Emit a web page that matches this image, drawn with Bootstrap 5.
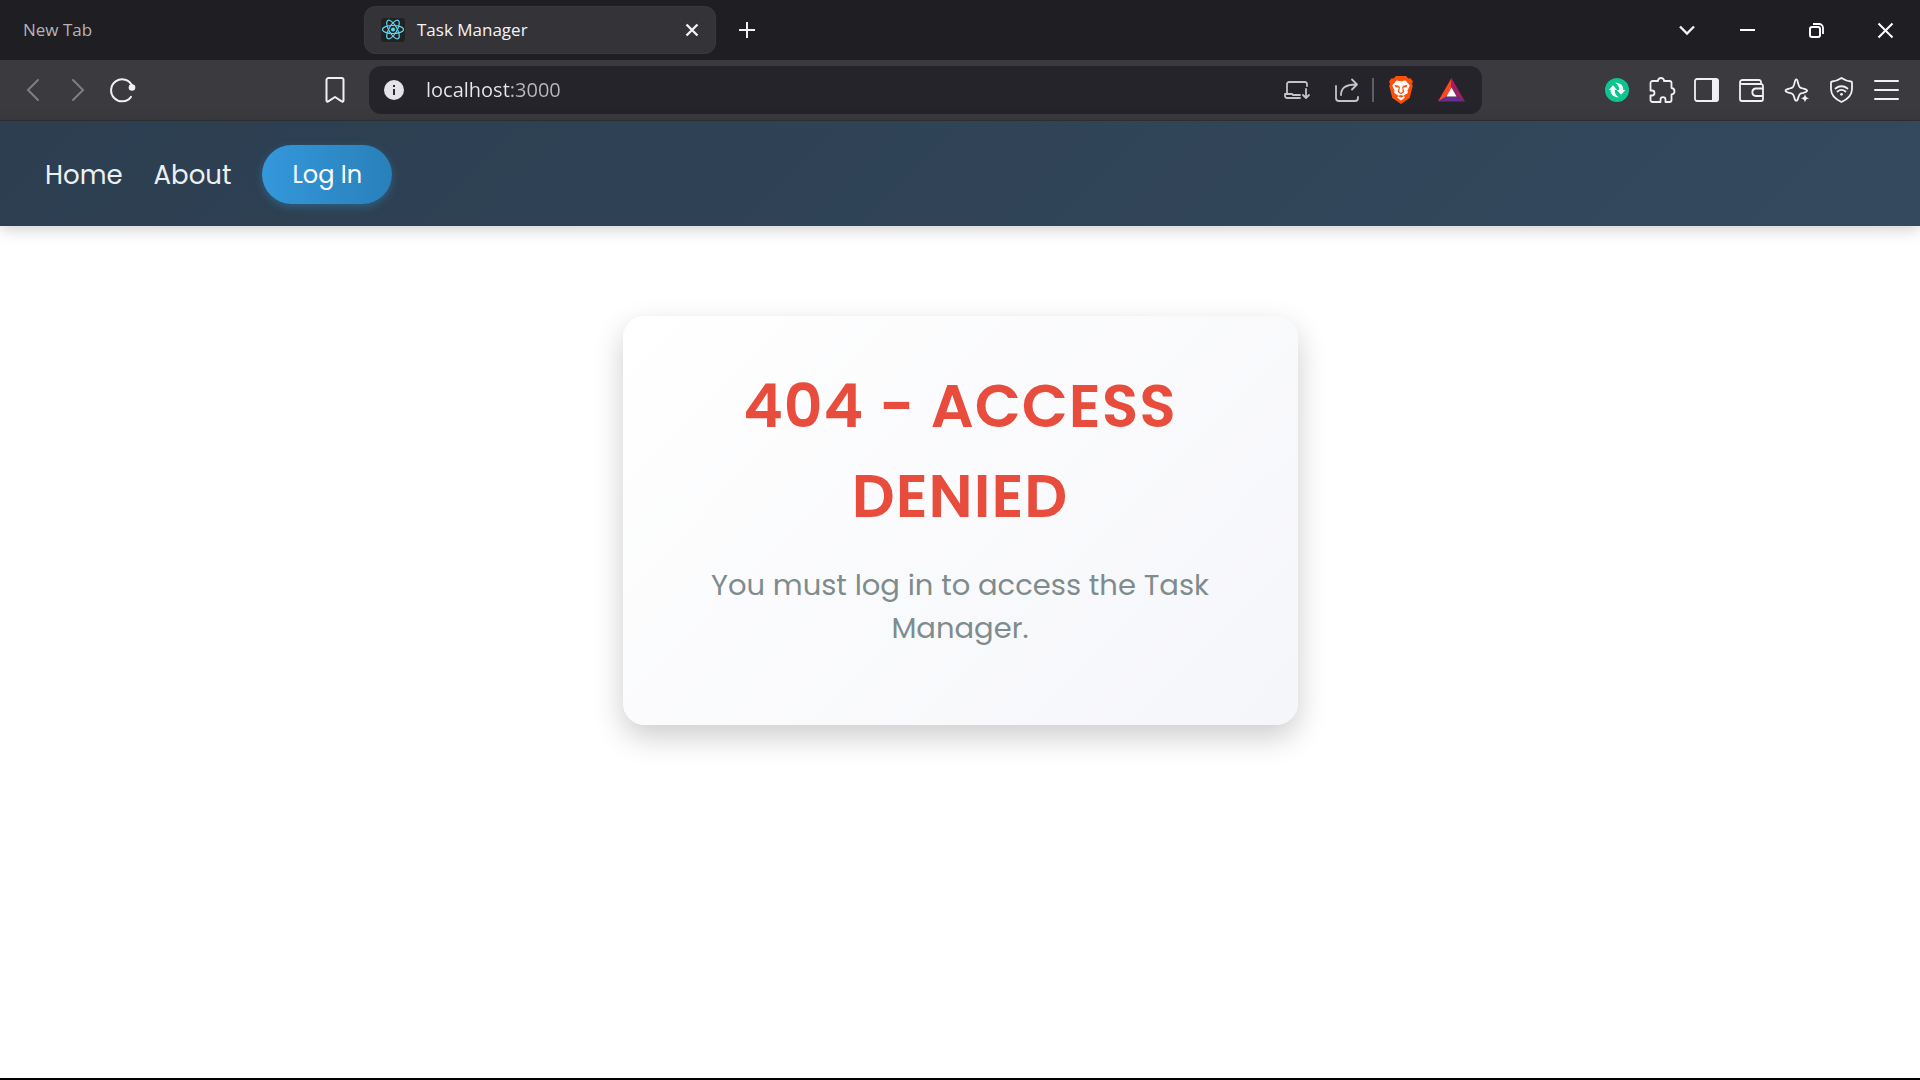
<!DOCTYPE html>
<html lang="en">
<head>
<meta charset="utf-8">
<meta name="viewport" content="width=device-width, initial-scale=1">
<title>Task Manager</title>
<link href="https://cdn.jsdelivr.net/npm/bootstrap@5.3.0/dist/css/bootstrap.min.css" rel="stylesheet">
<style>
  body { background: #fff; font-family: Poppins, Inter, sans-serif; }
  svg { display: block; overflow: visible; }
  .chrome-ui { font-family: "Segoe UI", "Open Sans", sans-serif; }
  .icon-btn { width: 45px; height: 48px; padding: 0; border: 0; background: none; color: #f1f0f4; display: flex; align-items: center; justify-content: center; flex: none; }
  .icon-btn:disabled { color: #7f7e83; }
  .tab-strip { height: 60px; background: #1f1e23; }
  .tab-idle { flex: 0 0 364px; padding-left: 23px; color: #b5b4b8; font-size: 17px; line-height: 24px; }
  .tab-live { flex: 0 0 352px; height: 48px; padding: 0 2px 0 17px; border-radius: 12px; background: #343337; color: #f4f3f7; font-size: 17px; line-height: 24px; box-shadow: inset 0 0 0 1px #39383c; }
  .win-btn { width: 69px; height: 60px; color: #fff; }
  .tool-strip { height: 61px; background: #3b3a3e; border-bottom: 1px solid #302f33; }
  .tool-left { flex: 0 0 369px; padding: 0 12px 0 10px; }
  .tool-right { flex: 0 0 438px; padding-right: 11px; }
  .url-box { height: 48px; border-radius: 12px; background: #25242a; padding-right: 6px; }
  .url-box .icon-btn { width: 50px; color: #c4c3c8; }
  .url-field { border: 0; outline: 0; padding: 0; margin-left: 7px; font-size: 20px; line-height: 28px; color: transparent; background: linear-gradient(90deg, #e8e7ec 84px, #b9b8bd 84px); -webkit-background-clip: text; background-clip: text; }
  .url-rule { width: 2px; height: 24px; background: #5f5e63; margin-right: 2px; flex: none; }
  .site-nav { padding: 24px 45px 22px; gap: 31px; background: linear-gradient(135deg, #2c3e50, #34495e); box-shadow: 0 3px 15px rgba(0,0,0,.2); }
  .site-link { color: #ecf0f1; font-size: 26px; line-height: 40px; text-decoration: none; }
  .login-btn { border: 0; border-radius: 30px; padding: 12px 30px 11px; color: #fff; font-size: 24px; line-height: 36px; background: linear-gradient(90deg, #3498db, #2980b9); box-shadow: 0 3px 8px rgba(52,152,219,.35); }
  .denied-wrap { padding-top: 90px; }
  .denied-card { width: 100%; max-width: 675px; border: 0; border-radius: 22px; padding: 45px 45px 75px; background: linear-gradient(135deg, #fff, #f5f6fa); box-shadow: 0 12px 30px rgba(0,0,0,.2); }
  .denied-title { margin: 0 0 23px; font-size: 60px; line-height: 90px; font-weight: 600; letter-spacing: 1px; color: #e74c3c; text-transform: uppercase; }
  .denied-text { margin: 0; font-size: 29px; line-height: 43px; color: #7f8c8d; }
  .base-line { height: 2px; background: #000; }
</style>
<script src="https://cdn.jsdelivr.net/npm/bootstrap@5.3.0/dist/js/bootstrap.bundle.min.js" defer></script>
</head>
<body class="d-flex flex-column min-vh-100">

<header class="chrome-ui">
  <div class="tab-strip d-flex align-items-center">
    <div class="tab-idle">New Tab</div>
    <div class="tab-live d-flex align-items-center">
      <svg width="24" height="24" viewBox="0 0 24 24" fill="none" stroke="#5fd3f0" stroke-width="1.2"><rect width="24" height="24" rx="3" fill="#222" stroke="none"/><g transform="translate(12 11.5)"><ellipse rx="10.5" ry="4"/><ellipse rx="10.5" ry="4" transform="rotate(60)"/><ellipse rx="10.5" ry="4" transform="rotate(120)"/><circle r="2" fill="#5fd3f0" stroke="none"/></g></svg>
      <span class="ms-2 ps-1 flex-grow-1">Task Manager</span>
      <button class="icon-btn" type="button" aria-label="Close tab"><svg width="12" height="12" viewBox="0 0 12 12" stroke="currentColor" stroke-width="2.4"><path d="M.5.5l11 11M11.500.5l-11 11"/></svg></button>
    </div>
    <button class="icon-btn ms-2" type="button" aria-label="New tab"><svg width="16" height="16" viewBox="0 0 16 16" stroke="currentColor" stroke-width="2"><path d="M0 8h16M8 0v16"/></svg></button>
    <div class="d-flex align-items-center ms-auto">
      <button class="icon-btn me-1" type="button" aria-label="Search tabs"><svg width="16" height="10" viewBox="0 0 16 10" fill="none" stroke="currentColor" stroke-width="2.4"><path d="M1 1.500l7 7 7-7"/></svg></button>
      <button class="icon-btn win-btn" type="button" aria-label="Minimize"><svg width="15" height="2" viewBox="0 0 15 2"><path fill="currentColor" d="M0 0h15v2H0z"/></svg></button>
      <button class="icon-btn win-btn" type="button" aria-label="Restore"><svg width="15" height="15" viewBox="0 0 15 15" fill="none" stroke="currentColor" stroke-width="2"><rect x="1" y="4" width="10" height="10" rx="2"/><path d="M4 1h6a4 4 0 0 1 4 4v6" stroke-width="1.800"/></svg></button>
      <button class="icon-btn win-btn" type="button" aria-label="Close"><svg width="15" height="15" viewBox="0 0 15 15" stroke="currentColor" stroke-width="2"><path d="M.5.5l14 14M14.500.5l-14 14"/></svg></button>
    </div>
  </div>

  <div class="tool-strip d-flex align-items-center">
    <div class="tool-left d-flex align-items-center">
      <button class="icon-btn" type="button" disabled aria-label="Back"><svg width="12" height="22" viewBox="0 0 12 22" fill="none" stroke="currentColor" stroke-width="2" stroke-linecap="round"><path d="M11 1L1 11l10 10"/></svg></button>
      <button class="icon-btn" type="button" disabled aria-label="Forward"><svg width="12" height="22" viewBox="0 0 12 22" fill="none" stroke="currentColor" stroke-width="2" stroke-linecap="round"><path d="M1 1l10 10L1 21"/></svg></button>
      <button class="icon-btn" type="button" aria-label="Reload"><svg width="26" height="24" viewBox="0 0 26 24" fill="none" stroke="currentColor" stroke-width="2" stroke-linecap="round"><path d="M22.200 8A11 11 0 1 0 21 18.800"/><circle cx="22" cy="9.500" r="3.300" fill="currentColor" stroke="none"/></svg></button>
      <button class="icon-btn ms-auto" type="button" aria-label="Bookmark"><svg width="20" height="26" viewBox="0 0 20 26" fill="none" stroke="currentColor" stroke-width="2" stroke-linejoin="round"><path d="M1.500 3a2 2 0 0 1 2-2h13a2 2 0 0 1 2 2v20.500c0 1-1 1.500-1.800.8L10 20l-6.700 4.300c-.8.700-1.800.2-1.800-.8z"/></svg></button>
    </div>

    <div class="url-box d-flex align-items-center flex-grow-1">
      <button class="icon-btn" type="button" aria-label="Site information"><svg width="20" height="20" viewBox="0 0 20 20"><circle cx="10" cy="10" r="10" fill="#e4e3e8"/><path fill="#2b2a2f" d="M9 5h2v2H9zM9 9h2v6H9z"/></svg></button>
      <input class="url-field flex-grow-1" type="text" value="localhost:3000" aria-label="Address">
      <button class="icon-btn" type="button" aria-label="Install"><svg width="26" height="18" viewBox="0 0 26 18" fill="none" stroke="currentColor" stroke-width="1.800" stroke-linecap="round" stroke-linejoin="round"><path d="M23 5V3a2 2 0 0 0-2-2H5a2 2 0 0 0-2 2v10M16 17H3a2 2 0 0 1-2-2v-2h7l1 1h7"/><path d="M22 8v9M19 14l3 3 3-3"/></svg></button>
      <button class="icon-btn" type="button" aria-label="Share"><svg width="24" height="24" viewBox="0 0 24 24" fill="none" stroke="currentColor" stroke-width="1.800" stroke-linecap="round" stroke-linejoin="round"><path d="M1 8v12a3 3 0 0 0 3 3h16a3 3 0 0 0 3-3v-1M6 17C6 10 11 6.500 21 6.500M17 1.500l5 5-5 5"/></svg></button>
      <span class="url-rule"></span>
      <button class="icon-btn" type="button" aria-label="Shields"><svg width="24" height="28" viewBox="0 0 24 28"><path fill="#fb4f0a" d="M7 0h10l2.500 2.500 2-.3L24 5.500 23 8l.7 2-3 12L12 28l-8.700-6L.3 10 1 8 0 5.500 2.500 2.200l2 .3z"/><path fill="#fff" d="M7.500 4.500L12 5.300l4.500-.8 4.300 5-2.300 5 .3 2.500-4.300 2.800L16 21.500l-4 3-4-3 1.500-1.700L5.200 17l.3-2.500-2.300-5z"/><path fill="#fb4f0a" d="M5.500 8.800l5 1.200-.7 1.600-3.300-.3zM18.500 8.800l-5 1.200.7 1.600 3.300-.3zM10 11h1l-.8 4.500L12 17l1.800-1.500L13 11h1l1.300 5-3.300 2.300L8.700 16zM9 20l3-1 3 1-3 1.800z"/></svg></button>
      <button class="icon-btn" type="button" aria-label="Rewards"><svg width="27" height="24" viewBox="0 0 27 24"><path fill="#ff4724" d="M13.500 0L0 23.500l8.500-5 5-8.500z"/><path fill="#9e1f63" d="M13.500 0L27 23.500l-8.500-5-5-8.500z"/><path fill="#662d91" d="M0 23.500h27l-8.500-5h-10z"/><path fill="#fff" d="M13.500 9.500l5 9h-10z"/></svg></button>
    </div>

    <div class="tool-right d-flex align-items-center justify-content-end">
      <button class="icon-btn" type="button" aria-label="Extension"><svg width="24" height="24" viewBox="0 0 24 24"><circle cx="12" cy="12" r="12" fill="#0dc58f"/><path fill="#fff" d="M10 4.500c5.500.2 8.800 3.500 8.300 7.500h2L16 16.800 12 12h2.300c.2-3-1.300-5.500-4.300-7.500zM14 19.500c-5.500-.2-8.800-3.500-8.300-7.500h-2L8 7.200 12 12H9.700c-.2 3 1.300 5.500 4.300 7.500z"/></svg></button>
      <button class="icon-btn" type="button" aria-label="Extensions"><svg width="26" height="26" viewBox="0 0 26 26" fill="none" stroke="currentColor" stroke-width="1.800" stroke-linejoin="round"><path d="M3.500 4H9c-.3-4 6.300-4 6 0h5.500a2 2 0 0 1 2 2v5c4 .5 4 6 0 6.500V23a2 2 0 0 1-2 2h-4v-2.500c0-3.300-5-3.300-5 0V25h-8a2 2 0 0 1-2-2v-4.500H3c3.300 0 3.300-5 0-5H1.500V6a2 2 0 0 1 2-2z"/></svg></button>
      <button class="icon-btn" type="button" aria-label="Sidebar"><svg width="25" height="24" viewBox="0 0 25 24"><rect x="1" y="1" width="23" height="22" rx="2" fill="none" stroke="currentColor" stroke-width="1.800"/><path fill="currentColor" d="M18 1h5a1.500 1.500 0 0 1 1.500 1.500v19A1.500 1.500 0 0 1 23 23h-5z"/></svg></button>
      <button class="icon-btn" type="button" aria-label="Wallet"><svg width="25" height="23" viewBox="0 0 25 23" fill="none" stroke="currentColor" stroke-width="1.800" stroke-linejoin="round"><path d="M22 5V3a2 2 0 0 0-2-2H3.500a2.500 2.500 0 0 0-2.500 2.500V20a2 2 0 0 0 2 2h19a2 2 0 0 0 2-2V7a2 2 0 0 0-2-2H3.500C2 5 1 4.500 1 3.500M24 9.500h-7.500a3.800 3.800 0 0 0 0 7.500H24z"/></svg></button>
      <button class="icon-btn" type="button" aria-label="Leo AI"><svg width="25" height="25" viewBox="0 0 25 25" fill="none" stroke="currentColor" stroke-width="1.800" stroke-linejoin="round"><path d="M16.500 15.500c-1.300.8-1.700 2-2.200 4-.5 2.200-.9 3.200-2 3.200s-1.500-1-2-3.200c-.8-3.200-1.400-3.800-4.600-4.600-2.700-.7-4.200-1-4.200-2.200s1.500-1.500 4.200-2.200c3.200-.8 3.800-1.400 4.600-4.600.7-2.900.9-4.600 2-4.600s1.300 1.700 2 4.600c.8 3.200 1.400 3.800 4.600 4.600 2.700.7 4.200 1 4.200 2.200s-1.400 1.500-3.600 2.100c-1.400.3-2.300.3-3 .7z"/><path fill="currentColor" stroke="none" d="M21 16c.7 2.900 1.400 3.600 4.300 4.300-2.900.7-3.600 1.400-4.300 4.300-.7-2.900-1.400-3.600-4.300-4.300 2.900-.7 3.600-1.400 4.300-4.300z"/></svg></button>
      <button class="icon-btn" type="button" aria-label="VPN"><svg width="23" height="26" viewBox="0 0 23 26" fill="none" stroke="currentColor" stroke-width="1.800" stroke-linecap="round" stroke-linejoin="round"><path d="M11.500 1c3 2 6 3.200 9.500 3.500.6 0 1 .4 1 1V12c0 6-4 10-10.500 13C5 22 1 18 1 12V5.500c0-.6.400-1 1-1C5.500 4.200 8.500 3 11.500 1z"/><path d="M5.500 11.500c3.500-3 8.500-3 12 0M7.500 14.500c2.500-2 5.500-2 8 0"/><circle cx="11.500" cy="17.300" r="1.400" fill="currentColor" stroke="none"/></svg></button>
      <button class="icon-btn" type="button" aria-label="Menu"><svg width="25" height="20" viewBox="0 0 25 20" stroke="currentColor" stroke-width="2" stroke-linecap="round"><path d="M1 1h23M1 10h23M1 19h23"/></svg></button>
    </div>
  </div>
</header>

<nav class="site-nav d-flex align-items-center">
  <a class="site-link" href="#">Home</a>
  <a class="site-link" href="#">About</a>
  <button class="login-btn" type="button">Log In</button>
</nav>

<main class="denied-wrap d-flex justify-content-center align-items-start flex-grow-1">
  <section class="card denied-card text-center">
    <h1 class="denied-title">404 - Access Denied</h1>
    <p class="denied-text">You must log in to access the Task Manager.</p>
  </section>
</main>
<div class="base-line"></div>

</body>
</html>
